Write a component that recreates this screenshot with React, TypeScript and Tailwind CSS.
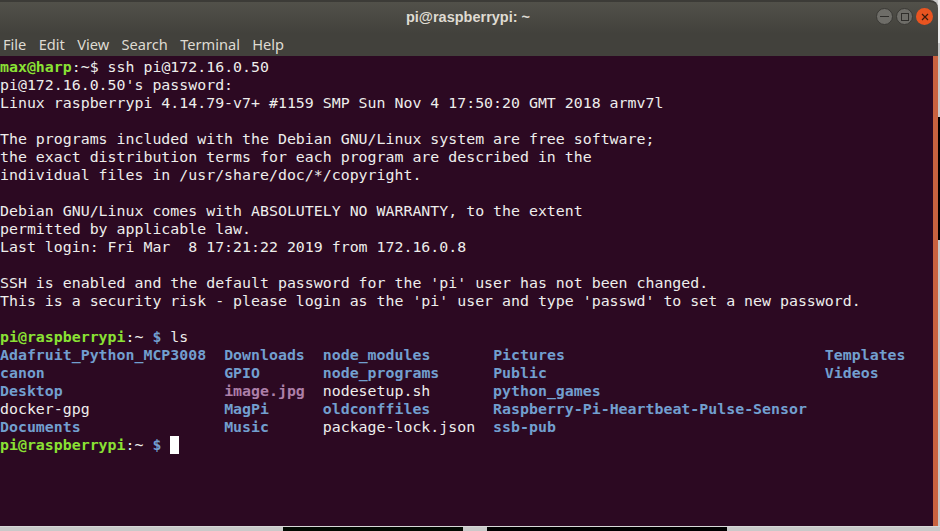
const prompt = "text-[#8ae234] font-bold";
const blue = "text-[#729fcf] font-bold";
const pink = "text-[#ad7fa8] font-bold";

function Row({ children }: { children?: React.ReactNode }) {
  return <div className="h-[18px] whitespace-pre leading-[18px]">{children || " "}</div>;
}

export default function App() {
  return (
    <div className="w-[940px] h-[531px] overflow-hidden relative bg-[#c9c9c9] flex flex-col">
      <div className="flex flex-col h-[526px] w-[938px] shrink-0 border-b-0">
        <div className="h-[33px] shrink-0 bg-gradient-to-b from-[#52514a] to-[#42413c] border-t-2 border-[#3c3b37] relative flex items-center justify-center rounded-tr-lg">
          <span className="text-[#dfdbd2] font-bold text-[14.5px] pt-[1px] pr-[2px] font-['Liberation_Sans',sans-serif]">pi@raspberrypi: ~</span>
          <div className="absolute right-[5px] top-[6px] flex gap-[3px]">
            <div className="w-[17px] h-[17px] rounded-full bg-[#6e6d68] border border-[#3a3935] flex items-center justify-center">
              <div className="w-[9px] h-[1px] bg-[#2f2e2b]" />
            </div>
            <div className="w-[17px] h-[17px] rounded-full bg-[#6e6d68] border border-[#3a3935] flex items-center justify-center">
              <div className="w-[8px] h-[8px] border border-[#2f2e2b]" />
            </div>
            <div className="w-[17px] h-[17px] rounded-full bg-[#e95420] flex items-center justify-center">
              <svg width="8" height="8" viewBox="0 0 8 8"><path d="M1 1L7 7M7 1L1 7" stroke="#3a1a0c" strokeWidth="1.2" /></svg>
            </div>
          </div>
        </div>
        <div className="h-[23px] shrink-0 bg-[#42413c] flex items-center pl-[3px] pt-[1px] gap-[12.4px] text-[#dfdbd2] text-[14.6px] font-['Noto_Sans',sans-serif]">
          <span>File</span><span>Edit</span><span>View</span><span>Search</span><span>Terminal</span><span>Help</span>
        </div>
        <div className="flex flex-1 min-h-0 bg-[#2c0922]">
          <div className="flex-1 pt-[2px] text-[#eeeeec] text-[14.9px] font-['DejaVu_Sans_Mono','Liberation_Mono',monospace]">
            <Row><span className={prompt}>max@harp</span>:~$ ssh pi@172.16.0.50</Row>
            <Row>pi@172.16.0.50's password:</Row>
            <Row>Linux raspberrypi 4.14.79-v7+ #1159 SMP Sun Nov 4 17:50:20 GMT 2018 armv7l</Row>
            <Row />
            <Row>The programs included with the Debian GNU/Linux system are free software;</Row>
            <Row>the exact distribution terms for each program are described in the</Row>
            <Row>individual files in /usr/share/doc/*/copyright.</Row>
            <Row />
            <Row>Debian GNU/Linux comes with ABSOLUTELY NO WARRANTY, to the extent</Row>
            <Row>permitted by applicable law.</Row>
            <Row>Last login: Fri Mar  8 17:21:22 2019 from 172.16.0.8</Row>
            <Row />
            <Row>SSH is enabled and the default password for the 'pi' user has not been changed.</Row>
            <Row>This is a security risk - please login as the 'pi' user and type 'passwd' to set a new password.</Row>
            <Row />
            <Row><span className={prompt}>pi@raspberrypi</span>:~ <span className={blue}>$</span> ls</Row>
            <Row><span className={blue}>Adafruit_Python_MCP3008</span>  <span className={blue}>Downloads</span>  <span className={blue}>node_modules</span>       <span className={blue}>Pictures</span>                             <span className={blue}>Templates</span></Row>
            <Row><span className={blue}>canon</span>                    <span className={blue}>GPIO</span>       <span className={blue}>node_programs</span>      <span className={blue}>Public</span>                               <span className={blue}>Videos</span></Row>
            <Row><span className={blue}>Desktop</span>                  <span className={pink}>image.jpg</span>  nodesetup.sh       <span className={blue}>python_games</span></Row>
            <Row>docker-gpg               <span className={blue}>MagPi</span>      <span className={blue}>oldconffiles</span>       <span className={blue}>Raspberry-Pi-Heartbeat-Pulse-Sensor</span></Row>
            <Row><span className={blue}>Documents</span>                <span className={blue}>Music</span>      package-lock.json  <span className={blue}>ssb-pub</span></Row>
            <Row><span className={prompt}>pi@raspberrypi</span>:~ <span className={blue}>$</span> <span className="inline-block w-[9px] h-[18px] bg-white align-top" /></Row>
          </div>
          <div className="w-[5px] h-full bg-[#c8623f]" />
        </div>
      </div>
      <div className="flex-1 relative border-t border-[#d8d8d8]">
        <div className="absolute left-[283px] top-0 w-[180px] h-[4px] bg-[#020a02]" />
        <div className="absolute left-[487px] top-0 w-[240px] h-[4px] bg-black" />
      </div>
      <div className="absolute right-0 top-0 w-[2px] h-[43px] bg-[#ececec]" />
      <div className="absolute right-0 top-[117px] w-[2px] h-[123px] bg-black" />
    </div>
  );
}
